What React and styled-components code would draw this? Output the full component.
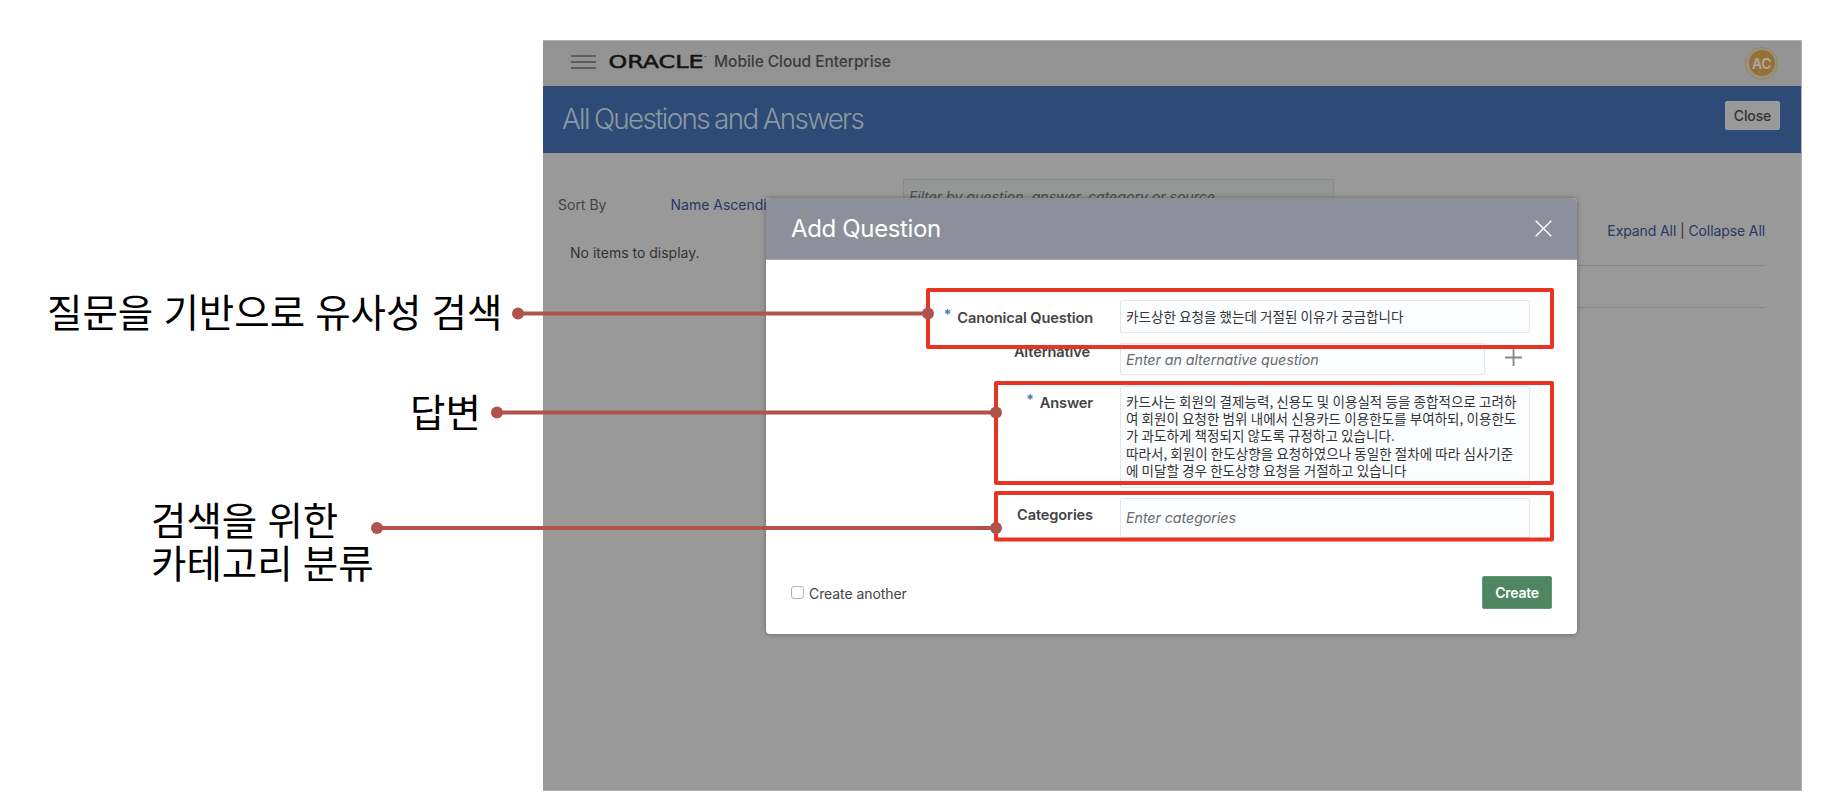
import React from "react";
import styled, { createGlobalStyle, css } from "styled-components";

const sans = `Inter, "Noto Sans CJK KR", sans-serif`;
const korean = `"Noto Sans CJK KR", "Noto Sans", sans-serif`;

const GlobalStyle = createGlobalStyle`
  * { box-sizing: border-box; }
  body { margin: 0; background: #fff; }
`;

const Slide = styled.main`
  position: relative;
  width: 1830px;
  height: 806px;
  display: grid;
  grid-template-columns: 543px 1259px;
  padding-top: 40px;
  overflow: hidden;
  font-family: ${sans};
`;

const Notes = styled.aside`
  display: flex;
  flex-direction: column;
  padding: 249px 0 0 47px;
`;

const Note = styled.p`
  margin: ${(p) => p.$gap || 0}px 0 0 ${(p) => p.$indent || 0}px;
  font: 400 38.5px/43px ${korean};
  word-spacing: 1.5px;
  color: #000;
  white-space: pre;
`;

const AppWindow = styled.section`
  height: 751px;
  background: #999;
  border: 1px solid #b4b4b4;
  border-left: 0;
`;

const TopBar = styled.header`
  height: 45px;
  display: flex;
  align-items: center;
  background: #939393;
  padding: 0 23px 0 28px;
`;

const MenuIcon = styled.svg`
  width: 25px;
  height: 16px;
  margin-top: -4px;
`;

const Logo = styled.svg`
  width: 98px;
  height: 18px;
  margin: -3px 0 0 13px;
`;

const Product = styled.span`
  margin: -4px auto 0 7px;
  font-size: 15.5px;
  font-weight: 500;
  letter-spacing: -0.05px;
  color: #3b3b3b;
`;

const Avatar = styled.div`
  width: 33px;
  height: 33px;
  margin-top: -1px;
  border: 1px solid #a5843f;
  border-radius: 50%;
  padding: 2.5px;
`;

const AvatarFace = styled.div`
  width: 100%;
  height: 100%;
  border-radius: 50%;
  background: #967133;
  color: #aaa;
  font-size: 14px;
  font-weight: 600;
  letter-spacing: -0.4px;
  display: grid;
  place-items: center;
`;

const TitleBar = styled.div`
  height: 67px;
  display: flex;
  justify-content: space-between;
  background: #2d4b76;
  padding: 15px 21px 0 19px;
`;

const PageTitle = styled.h1`
  margin: 0;
  font: 300 27.8px/36px ${sans};
  letter-spacing: -1.65px;
  word-spacing: -1px;
  color: #8b98a2;
`;

const CloseButton = styled.button`
  width: 55px;
  height: 29px;
  padding: 0;
  border: 1px solid #9c9fa3;
  border-radius: 2px;
  background: #999;
  font: 500 14px ${sans};
  letter-spacing: -0.15px;
  color: #333;
`;

const Content = styled.div`
  display: grid;
  grid-template-columns: 345px 1fr;
  padding: 26px 36px 0 15px;
`;

const ListPane = styled.div`
  padding-top: 17px;
  font-size: 14px;
  line-height: 18px;
  color: #333;
`;

const SortRow = styled.div`
  display: flex;
  color: #444;
`;

const SortLabel = styled.span`
  width: 112.5px;
`;

const SortValue = styled.a`
  width: 95px;
  overflow: hidden;
  white-space: nowrap;
  color: #2a3764;
`;

const LinkText = styled.a`
  color: #2a3764;
`;

const EmptyText = styled.p`
  margin: 30px 0 0 12px;
`;

const ResultsPane = styled.div`
  display: flex;
  flex-direction: column;
`;

const FilterBox = styled.div`
  width: 431px;
  height: 34px;
  border: 1px solid #878b8b;
  background: #959796;
  padding: 7px 5px;
  font: italic 400 14.3px/20px ${sans};
  color: #4e4e4e;
  letter-spacing: -0.1px;
`;

const ExpandRow = styled.div`
  align-self: flex-end;
  margin-top: 8px;
  height: 44px;
  font-size: 14px;
  line-height: 20px;
  letter-spacing: -0.1px;
  color: #333;
`;

const Divider = styled.hr`
  margin: 0;
  width: 100%;
  height: 42px;
  border: 0;
  border-top: 1px solid #848688;
`;

const Dialog = styled.section`
  position: absolute;
  left: 766px;
  top: 198px;
  width: 811px;
  height: 436px;
  background: #fff;
  border-radius: 4px;
  box-shadow: 0 0 5px rgba(0, 0, 0, 0.35);
  overflow: hidden;
`;

const DialogHeader = styled.header`
  height: 62px;
  display: flex;
  align-items: center;
  justify-content: space-between;
  padding: 0 25px;
  background: #8d8f9b;
  border-bottom: 1px solid #a5a9b8;
`;

const DialogTitle = styled.h2`
  margin: 0;
  font: 400 24px/30px ${sans};
  letter-spacing: -0.35px;
  color: #fff;
`;

const CloseIcon = styled.svg`
  width: 17px;
  height: 17px;
`;

const Form = styled.form`
  display: flex;
  flex-direction: column;
  padding: 40px 48px 0 0;
`;

const FormRow = styled.div`
  display: flex;
  height: ${(p) => p.$height}px;
`;

const Label = styled.label`
  width: ${(p) => p.$width || 327}px;
  margin-top: ${(p) => p.$top}px;
  margin-right: ${(p) => 354 - (p.$width || 327)}px;
  flex: none;
  text-align: right;
  font: 600 14.6px/20px ${sans};
  letter-spacing: -0.12px;
  color: #444;
`;

const Required = styled.span`
  display: inline-block;
  height: 20px;
  margin-right: 6px;
  vertical-align: 3px;
  font-size: 14px;
  line-height: 20px;
  color: #3f74b5;
`;

const field = css`
  flex: none;
  border: 1px solid #e3e8ec;
  border-radius: 2px;
  background: #fcfdff;
  padding: 0 5px;
  color: #333;
  letter-spacing: 0.06px;
`;

const Field = styled.div`
  ${field}
  width: ${(p) => p.$width || 410}px;
  height: ${(p) => p.$height || 33}px;
  font: 400 13.5px/${(p) => p.$line || 30}px ${korean};
`;

const Hint = styled.span`
  font: italic 400 14.3px ${sans};
  letter-spacing: -0.08px;
  color: #6a6a6a;
`;

const AnswerField = styled.div`
  ${field}
  width: 410px;
  height: 102px;
  padding: 6px 5px 0;
  font: 400 13.5px/17.2px ${korean};
  white-space: pre;
`;

const PlusIcon = styled.svg`
  width: 17px;
  height: 17px;
  margin: 6px 0 0 20px;
`;

const DialogFooter = styled.footer`
  display: flex;
  justify-content: space-between;
  align-items: center;
  padding: 37px 25px 0;
`;

const CheckRow = styled.label`
  display: flex;
  align-items: center;
  gap: 5px;
  margin-top: 2px;
  font-size: 14px;
  letter-spacing: -0.08px;
  color: #444;
`;

const CheckBox = styled.span`
  width: 13px;
  height: 13px;
  margin-top: -3px;
  border: 1px solid #b2b2b2;
  border-radius: 3px;
  background: #fff;
`;

const CreateButton = styled.button`
  width: 70px;
  height: 33px;
  padding: 0;
  border: 1px solid #669677;
  border-radius: 2px;
  background: #4d8661;
  color: #fff;
  font: 600 14px ${sans};
  letter-spacing: -0.3px;
`;

const Annotations = styled.svg`
  position: absolute;
  inset: 0;
  width: 1830px;
  height: 806px;
  pointer-events: none;
`;

const frames = [
  { x: 928, y: 290, w: 624, h: 57 },
  { x: 996, y: 383, w: 556, h: 100 },
  { x: 996, y: 493, w: 556, h: 46.5 },
];

const connectors = [
  { from: 518, to: 928, y: 313.5 },
  { from: 497, to: 996, y: 412.5 },
  { from: 377, to: 996, y: 528 },
];

const answer = [
  "카드사는 회원의 결제능력, 신용도 및 이용실적 등을 종합적으로 고려하",
  "여 회원이 요청한 범위 내에서 신용카드 이용한도를 부여하되, 이용한도",
  "가 과도하게 책정되지 않도록 규정하고 있습니다.",
  "따라서, 회원이 한도상향을 요청하였으나 동일한 절차에 따라 심사기준",
  "에 미달할 경우 한도상향 요청을 거절하고 있습니다",
].join("\n");

export default function App() {
  return (
    <Slide>
      <GlobalStyle />
      <Notes>
        <Note>질문을 기반으로 유사성 검색</Note>
        <Note $gap={57} $indent={363}>답변</Note>
        <Note $gap={65} $indent={104}>{"검색을 위한\n카테고리 분류"}</Note>
      </Notes>

      <AppWindow>
        <TopBar>
          <MenuIcon viewBox="0 0 25 16" stroke="#5c5f62" strokeWidth="2">
            <path d="M0 2H25M0 8H25M0 14H25" />
          </MenuIcon>
          <Logo viewBox="0 0 98 18">
            <text x="-0.5" y="15.3" fontFamily="DejaVu Sans" fontSize="17" textLength="95" lengthAdjust="spacingAndGlyphs" fill="#141414" stroke="#141414" strokeWidth="0.5">ORACLE</text>
            <circle cx="96.5" cy="3.5" r="0.8" fill="#444" />
          </Logo>
          <Product>Mobile Cloud Enterprise</Product>
          <Avatar><AvatarFace>AC</AvatarFace></Avatar>
        </TopBar>
        <TitleBar>
          <PageTitle>All Questions and Answers</PageTitle>
          <CloseButton>Close</CloseButton>
        </TitleBar>
        <Content>
          <ListPane>
            <SortRow>
              <SortLabel>Sort By</SortLabel>
              <SortValue>Name Ascendi</SortValue>
            </SortRow>
            <EmptyText>No items to display.</EmptyText>
          </ListPane>
          <ResultsPane>
            <FilterBox>Filter by question, answer, category or source</FilterBox>
            <ExpandRow><LinkText>Expand All</LinkText> | <LinkText>Collapse All</LinkText></ExpandRow>
            <Divider />
            <Divider />
          </ResultsPane>
        </Content>
      </AppWindow>

      <Dialog>
        <DialogHeader>
          <DialogTitle>Add Question</DialogTitle>
          <CloseIcon viewBox="0 0 17 17" stroke="#fff" strokeWidth="1.4">
            <path d="M0.7 0.7L16.3 16.3M16.3 0.7L0.7 16.3" />
          </CloseIcon>
        </DialogHeader>
        <Form>
          <FormRow $height={43}>
            <Label $top={5}><Required>*</Required>Canonical Question</Label>
            <Field>카드상한 요청을 했는데 거절된 이유가 궁금합니다</Field>
          </FormRow>
          <FormRow $height={43}>
            <Label $width={324} $top={-1}>Alternative</Label>
            <Field $width={365} $height={32} $line={31}><Hint>Enter an alternative question</Hint></Field>
            <PlusIcon viewBox="0 0 17 17" stroke="#84888c" strokeWidth="1.8">
              <path d="M0 8.5H17M8.5 0V17" />
            </PlusIcon>
          </FormRow>
          <FormRow $height={112}>
            <Label $top={4}><Required>*</Required>Answer</Label>
            <AnswerField>{answer}</AnswerField>
          </FormRow>
          <FormRow $height={41}>
            <Label $top={7}>Categories</Label>
            <Field $height={40} $line={37}><Hint>Enter categories</Hint></Field>
          </FormRow>
        </Form>
        <DialogFooter>
          <CheckRow><CheckBox />Create another</CheckRow>
          <CreateButton>Create</CreateButton>
        </DialogFooter>
      </Dialog>

      <Annotations viewBox="0 0 1830 806">
        {frames.map((f) => (
          <rect key={f.y} x={f.x} y={f.y} width={f.w} height={f.h} fill="none" stroke="#e93323" strokeWidth="4" strokeLinejoin="round" />
        ))}
        {connectors.map((c) => (
          <g key={c.y} stroke="#b0534b" fill="#b0534b">
            <line x1={c.from} x2={c.to} y1={c.y} y2={c.y} strokeWidth="4" />
            <circle cx={c.from} cy={c.y} r="6" stroke="none" />
            <circle cx={c.to} cy={c.y} r="6" stroke="none" />
          </g>
        ))}
      </Annotations>
    </Slide>
  );
}
